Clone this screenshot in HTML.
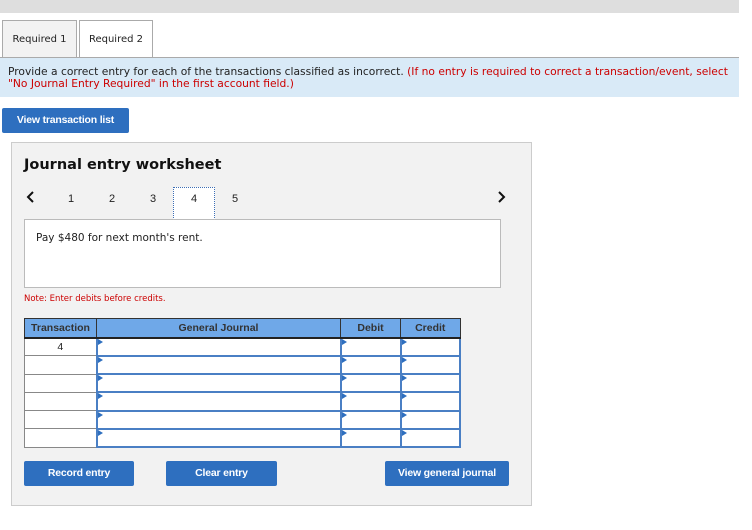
<!DOCTYPE html>
<html><head><style>
*{margin:0;padding:0;box-sizing:border-box}
body{width:752px;height:530px;background:#fff;font-family:"DejaVu Sans",Verdana,sans-serif;position:relative;overflow:hidden;color:#222}
.a{position:absolute}
.btn{position:absolute;background:#2e6fbf;color:#fff;font:bold 10.5px "Liberation Sans",Arial,sans-serif;text-align:center;border-radius:2px;letter-spacing:-0.2px}
.tab{position:absolute;top:20px;height:38px;border:1px solid #aaa;border-bottom:none;font-size:10px;line-height:38px;text-align:center}
table{border-collapse:collapse;position:absolute;left:24px;top:318px;width:437px}
th{background:#6fa8e8;font:bold 10.5px "Liberation Sans",Arial,sans-serif;color:#333;height:19px;border:1px solid #333;border-bottom:2px solid #222}
td{height:18.3px;border:1px solid #888;background:#fff;font:10.5px "Liberation Sans",Arial,sans-serif;text-align:center;padding:0}
td.i{border:2px solid #4a7fc4;border-top:2px solid #6a6a6a;position:relative}
td.i:before{content:"";position:absolute;left:0;top:0;border-left:5px solid #2e6fbf;border-top:3px solid transparent;border-bottom:3px solid transparent}
</style></head><body>
<div class="a" style="left:0;top:0;width:739px;height:13px;background:#dedede"></div>
<div class="tab" style="left:2px;width:75px;background:#f2f2f2">Required 1</div>
<div class="tab" style="left:79px;width:74px;background:#fff;height:38px">Required 2</div>
<div class="a" style="left:0;top:57px;width:739px;height:40px;background:#d9eaf7;border-top:1px solid #aaa;font-size:10.7px;padding:8px 0 0 8px;line-height:12px;white-space:nowrap">Provide a correct entry for each of the transactions classified as incorrect. <span style="color:#c00">(If no entry is required to correct a transaction/event, select<br>"No Journal Entry Required" in the first account field.)</span></div>
<div class="btn" style="left:2px;top:108px;width:127px;height:25px;line-height:25px">View transaction list</div>
<div class="a" style="left:11px;top:142px;width:521px;height:364px;background:#f2f2f2;border:1px solid #ccc"></div>
<div class="a" style="left:24px;top:157px;font-weight:bold;font-size:14.5px;color:#111">Journal entry worksheet</div>
<svg class="a" style="left:26px;top:191px" width="10" height="12"><path d="M7 1 L2 6 L7 11" stroke="#111" stroke-width="2" fill="none"/></svg>
<svg class="a" style="left:497px;top:191px" width="10" height="12"><path d="M2 1 L7 6 L2 11" stroke="#111" stroke-width="2" fill="none"/></svg>
<div class="a" style="left:173px;top:187px;width:42px;height:33px;background:#fff;border:1px dotted #3d6eb5;border-bottom:none"></div>
<div class="a" style="top:193px;left:68px;font:11px 'Liberation Sans',Arial,sans-serif;word-spacing:0">
<span class="a" style="left:0">1</span><span class="a" style="left:41px">2</span><span class="a" style="left:82px">3</span><span class="a" style="left:123px">4</span><span class="a" style="left:164px">5</span></div>
<div class="a" style="left:24px;top:219px;width:477px;height:69px;background:#fff;border:1px solid #bbb;font-size:10.5px;padding:12px 0 0 11px">Pay $480 for next month's rent.</div>
<div class="a" style="left:24px;top:294px;font-size:8.5px;color:#c00">Note: Enter debits before credits.</div>
<table>
<tr><th style="width:72px">Transaction</th><th style="width:244px">General Journal</th><th style="width:60px">Debit</th><th>Credit</th></tr>
<tr><td>4</td><td class="i"></td><td class="i"></td><td class="i"></td></tr>
<tr><td></td><td class="i"></td><td class="i"></td><td class="i"></td></tr>
<tr><td></td><td class="i"></td><td class="i"></td><td class="i"></td></tr>
<tr><td></td><td class="i"></td><td class="i"></td><td class="i"></td></tr>
<tr><td></td><td class="i"></td><td class="i"></td><td class="i"></td></tr>
<tr><td></td><td class="i"></td><td class="i"></td><td class="i"></td></tr>
</table>
<div class="btn" style="left:24px;top:461px;width:110px;height:25px;line-height:25px">Record entry</div>
<div class="btn" style="left:166px;top:461px;width:111px;height:25px;line-height:25px">Clear entry</div>
<div class="btn" style="left:385px;top:461px;width:124px;height:25px;line-height:25px">View general journal</div>
</body></html>
